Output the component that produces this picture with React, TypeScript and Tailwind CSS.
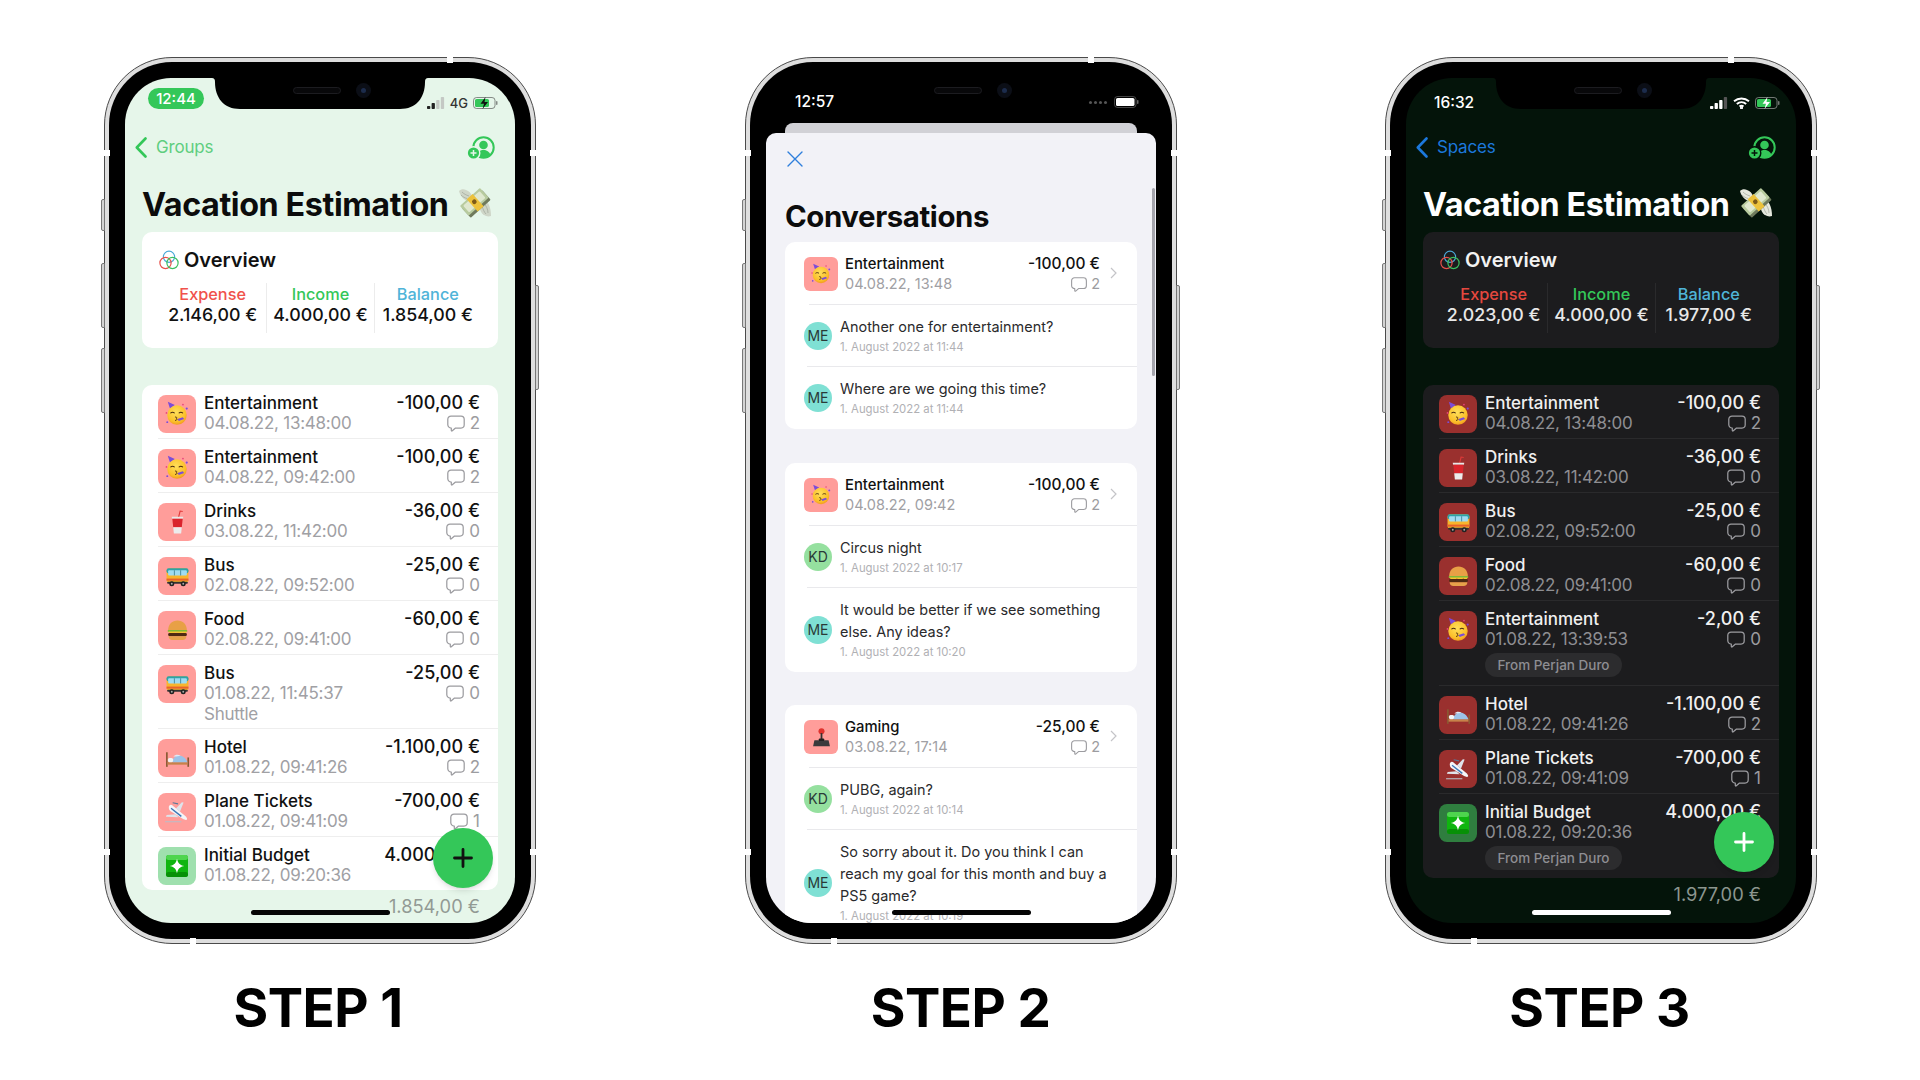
import React from "react";

const cx = (...a: (string | false | undefined)[]) => a.filter(Boolean).join(" ");

function Party() {
  return (
    <svg viewBox="0 0 24 24" className="w-[26px] h-[26px]">
      <defs>
        <radialGradient id="pf" cx="45%" cy="35%" r="70%">
          <stop offset="0%" stopColor="#ffdf5a" />
          <stop offset="70%" stopColor="#fbc02a" />
          <stop offset="100%" stopColor="#f0901c" />
        </radialGradient>
      </defs>
      <path d="M5.500 7 3.500.8 10 3.800z" fill="#7c4dd8" />
      <circle cx="12" cy="13" r="9" fill="url(#pf)" />
      <path d="M6.300 11c.9-.7 2.300-.7 3.200 0M14 11c.9-.7 2.300-.7 3.200 0" stroke="#4a2c10" strokeWidth="1" fill="none" strokeLinecap="round" />
      <path d="M10.500 14.800c1.400 0 1.800.9 1 1.400.9.400.7 1.500-.9 1.700" stroke="#4a2c10" strokeWidth=".9" fill="none" strokeLinecap="round" />
      <path d="M12.500 16.500l4.800-1.500 1.300 1.500-5 2z" fill="#7c4dd8" />
      <circle cx="21" cy="7" r="1" fill="#7c4dd8" />
      <circle cx="2.300" cy="11" r=".8" fill="#e8457c" />
      <circle cx="3" cy="19.500" r=".9" fill="#7c4dd8" />
      <circle cx="17.500" cy="3.300" r=".8" fill="#e8457c" />
    </svg>
  );
}
function Drink() {
  return (
    <svg viewBox="0 0 24 24" className="w-[25px] h-[25px]">
      <path d="M13 7 14.500 1l2.500.4" stroke="#e03a3a" strokeWidth="1.100" fill="none" />
      <path d="M6.500 6.500h11l-.3 2H6.800z" fill="#e8e8e8" />
      <path d="M7 8.500h10l-.9 8H7.900z" fill="#d9252d" />
      <path d="M7.900 16.500h8.200l-.6 6h-7z" fill="#ececec" />
    </svg>
  );
}
function Bus() {
  return (
    <svg viewBox="0 0 24 24" className="w-[25px] h-[25px]">
      <rect x="1.500" y="4" width="21" height="14" rx="3" fill="#f8b52c" />
      <rect x="1.500" y="4" width="21" height="5" rx="2" fill="#2fa2a8" />
      <rect x="3" y="6" width="18" height="5" rx="1" fill="#9fdcf2" />
      <path d="M9 6v5M15 6v5" stroke="#3c7f90" strokeWidth=".8" />
      <rect x="1.500" y="14" width="21" height="2" fill="#e8622c" />
      <rect x="2" y="17" width="20" height="2" rx="1" fill="#333" />
      <circle cx="6.500" cy="19" r="2.400" fill="#222" />
      <circle cx="17.500" cy="19" r="2.400" fill="#222" />
      <circle cx="6.500" cy="19" r=".9" fill="#aaa" />
      <circle cx="17.500" cy="19" r=".9" fill="#aaa" />
    </svg>
  );
}
function Burger() {
  return (
    <svg viewBox="0 0 24 24" className="w-[25px] h-[25px]">
      <path d="M3 12c0-6 4-9.500 9-9.500s9 3.500 9 9.500z" fill="#e8a046" />
      <rect x="2.500" y="11.500" width="19" height="2" rx="1" fill="#7fb83a" />
      <path d="M3 13h18l-1.500 2-3-1-3 1.500-3-1.500-3 1.500-3-1z" fill="#f6c62e" />
      <rect x="3" y="14.500" width="18" height="3" rx="1.400" fill="#4f2a12" />
      <path d="M3.500 17.500h17c0 2.500-1.500 3.500-3.500 3.500H7c-2 0-3.500-1-3.500-3.500z" fill="#e6a24a" />
    </svg>
  );
}
function Bed() {
  return (
    <svg viewBox="0 0 24 24" className="w-[25px] h-[25px]">
      <rect x="1" y="6" width="1.600" height="14" fill="#8a5a33" />
      <rect x="21.500" y="11" width="1.600" height="9" fill="#8a5a33" />
      <rect x="2.500" y="15.500" width="19" height="2.400" fill="#c7824a" />
      <path d="M7 15.500c0-3.500 3-6.500 6.500-6.500s7 3 8 6.500z" fill="#9cc3e8" />
      <path d="M8 10c2-2 5-2 7-.5-2 0-5 1-7 .5z" fill="#dfeaf5" />
      <rect x="2.800" y="11.500" width="5" height="4" rx="1.500" fill="#f3f3f3" />
    </svg>
  );
}
function Plane() {
  return (
    <svg viewBox="0 0 24 24" className="w-[26px] h-[26px]">
      <path d="M5 6c1-1 2.200-.6 3.400.4l11 9c1.500 1.300 2.400 2.800 1.800 3.600s-2.200.3-3.900-.7L5.800 11C4.300 9.800 4 7 5 6z" fill="#f4f5f8" />
      <path d="M11 8.800 16.500 3l1.600.3-3.400 8.500zM10.500 14 2.500 14.800l-.8 1.600 11.800.4z" fill="#dfe3ea" />
      <path d="M6.500 8.500l9.500 7.500" stroke="#3c78b8" strokeWidth="1.300" />
      <path d="M8 3.500l5 1" stroke="#5a7898" strokeWidth="1" />
      <path d="M1 21h15" stroke="#b8bec8" strokeWidth="1" />
    </svg>
  );
}
function Sparkle() {
  return (
    <svg viewBox="0 0 24 24" className="w-[24px] h-[24px]">
      <rect x="1" y="1" width="22" height="22" rx="3" fill="#0fb50f" />
      <rect x="1" y="1" width="22" height="5" rx="2.500" fill="#4ed54e" />
      <rect x="1" y="18" width="22" height="5" rx="2.500" fill="#079007" />
      <path d="M12 4.500c.7 4.500 3 6.800 7.500 7.500-4.500.7-6.800 3-7.500 7.500-.7-4.500-3-6.800-7.500-7.500 4.500-.7 6.800-3 7.500-7.500z" fill="#fff" />
    </svg>
  );
}
function Joystick() {
  return (
    <svg viewBox="0 0 24 24" className="w-[25px] h-[25px]">
      <circle cx="12" cy="5" r="3.400" fill="#e0332e" />
      <rect x="11" y="7" width="2" height="8" fill="#333" />
      <path d="M4 15h16l1.500 7h-19z" fill="#3a3a3c" />
      <rect x="9" y="13" width="6" height="3" rx="1" fill="#222" />
    </svg>
  );
}
function Money({ dark }: { dark: boolean }) {
  const w = dark ? "#e6e8de" : "#cfd6c8";
  return (
    <svg viewBox="0 0 34 31" className="w-[34px] h-[31px]">
      <path d="M1 4c2-2 5-2 7-1 3 1 5 3 6 6l-4 5C6 13 2 9 1 4z" fill={w} />
      <path d="M4 5c2 2 4 3 7 4M3 8c2 2 4 3 6 3.500" stroke="#9fa598" strokeWidth=".7" fill="none" />
      <path d="M22 17l4-5c4 2 7 8 7 17-3 1-5 0-7-1-3-2-5-6-4-11z" fill={w} />
      <path d="M26 16c2 3 4 6 4 10M24 19c1 3 2 6 4 8" stroke="#9fa598" strokeWidth=".7" fill="none" />
      <g transform="rotate(-42 17 15.500)">
        <rect x="3.500" y="11" width="27" height="13" rx="1" fill="#6f7a5c" />
        <rect x="3.500" y="8" width="27" height="13" rx="1" fill="#b8cb9f" />
        <rect x="6" y="10" width="22" height="9" rx="1" fill="#dfe8cf" />
        <rect x="13" y="7.500" width="8" height="16.500" fill="#ecc23c" />
        <circle cx="17" cy="14.500" r="2.300" fill="#7c5a18" />
      </g>
    </svg>
  );
}

function Bubble() {
  return (
    <svg viewBox="0 0 18 17" className="w-[18px] h-[17px]" fill="none" stroke="currentColor" strokeWidth="1.250" strokeLinejoin="round">
      <path d="M4 1h10a3.200 3.200 0 0 1 3.200 3.200v5.600A3.200 3.200 0 0 1 14 13H8.500l-3.200 2.800c-.5.400-1 .2-1-.5V13A3.300 3.300 0 0 1 .8 9.800V4.200A3.200 3.200 0 0 1 4 1z" />
    </svg>
  );
}

function PersonAdd({ ring }: { ring: string }) {
  return (
    <svg viewBox="0 0 29 23" className="w-[29px] h-[23px]" fill="none">
      <circle cx="16.500" cy="11.500" r="10.200" stroke="#34c759" strokeWidth="2" />
      <circle cx="16.500" cy="9" r="4.300" fill="#34c759" />
      <path d="M9.500 19c1-3.500 4-5 7-5s6 1.500 7 5c-2 2-4.500 3-7 3s-5-1-7-3z" fill="#34c759" />
      <circle cx="6.500" cy="17" r="7" fill={ring} />
      <circle cx="6.500" cy="17" r="5.600" fill="#34c759" />
      <path d="M6.500 14v6M3.500 17h6" stroke={ring} strokeWidth="1.500" />
    </svg>
  );
}

function Rings() {
  return (
    <svg viewBox="0 0 20 20" className="w-[20px] h-[20px]" fill="none" strokeWidth="1.200">
      <circle cx="10" cy="6.800" r="5.600" stroke="#4aa8d8" />
      <circle cx="6.500" cy="13" r="5.600" stroke="#e8504a" />
      <circle cx="13.500" cy="13" r="5.600" stroke="#3cc060" />
    </svg>
  );
}

function Battery({ fill, body, bolt, solid }: { fill: string; body: string; bolt?: string; solid?: boolean }) {
  return (
    <svg viewBox="0 0 25 12" className="w-[25px] h-[12px]">
      <rect x=".5" y=".5" width="21.500" height="11" rx="3" fill="none" stroke={body} strokeWidth="1" opacity={solid ? 0.4 : 0.6} />
      <rect x="2" y="2" width={solid ? 18.500 : 14} height="8" rx="1.600" fill={fill} />
      <rect x="23" y="4" width="1.500" height="4" rx=".7" fill={body} opacity=".6" />
      {bolt && <path d="M12.500 0 7.500 6.800h3.500L9.500 12l5.500-7h-3.500z" fill={bolt} />}
    </svg>
  );
}

function Signal({ on, off, active }: { on: string; off: string; active: number }) {
  return (
    <svg viewBox="0 0 18 12" className="w-[18px] h-[12px]">
      {[0, 1, 2, 3].map((i) => (
        <rect key={i} x={i * 4.600} y={9 - i * 3} width="3.300" height={3 + i * 3} rx=".8" fill={i < active ? on : off} />
      ))}
    </svg>
  );
}

function Wifi() {
  return (
    <svg viewBox="0 0 17 12" className="w-[17px] h-[12px]" fill="none" stroke="#fff" strokeWidth="1.900">
      <path d="M1 4.200c4.300-3.700 10.700-3.700 15 0" />
      <path d="M3.800 7c2.700-2.300 6.700-2.300 9.400 0" />
      <path d="M6.500 9.600c1.200-1 2.800-1 4 0" />
      <circle cx="8.500" cy="10.800" r=".6" fill="#fff" />
    </svg>
  );
}

function Chevron({ color }: { color: string }) {
  return (
    <svg viewBox="0 0 12 21" className="w-[12px] h-[21px]" fill="none" stroke={color} strokeWidth="2.600" strokeLinecap="round" strokeLinejoin="round">
      <path d="M10.500 1.500 1.800 10.500l8.700 9" />
    </svg>
  );
}

function Notch() {
  return (
    <div className="absolute top-0 left-[87px] w-[216px] h-[31px]">
      <svg viewBox="0 0 216 31" className="w-[216px] h-[31px]">
        <path d="M0 0C2 0 3 1 3 4 3 20 12 31 28 31H188C204 31 213 20 213 4 213 1 214 0 216 0Z" fill="#000" />
      </svg>
      <div className="absolute left-[81px] top-[9px] w-[48px] h-[7px] rounded-full bg-[#08080a] border border-[#1c1c20]" />
      <div className="absolute left-[144px] top-[5px] w-[15px] h-[15px] rounded-full bg-[#0b0e16]">
        <div className="w-[5px] h-[5px] rounded-full bg-[#1c2c4c] mt-[5px] ml-[5px]" />
      </div>
    </div>
  );
}

function Phone({ children, screen }: { children: React.ReactNode; screen: string }) {
  return (
    <div className="relative w-[432px] h-[887px] rounded-[68px] border border-[#4a4a4a] bg-[#dedede] p-[4px] shrink-0">
      <div className="absolute left-[-4px] top-[141px] w-[4px] h-[32px] bg-[#d4d4d4] border border-[#777] rounded-l-[2px]" />
      <div className="absolute left-[-4px] top-[205px] w-[4px] h-[65px] bg-[#d4d4d4] border border-[#777] rounded-l-[2px]" />
      <div className="absolute left-[-4px] top-[290px] w-[4px] h-[65px] bg-[#d4d4d4] border border-[#777] rounded-l-[2px]" />
      <div className="absolute right-[-4px] top-[227px] w-[4px] h-[105px] bg-[#d4d4d4] border border-[#777] rounded-r-[2px]" />
      <div className="absolute left-[342px] top-[-1px] w-[6px] h-[6px] bg-white" />
      <div className="absolute left-[-1px] top-[92px] w-[6px] h-[6px] bg-white" />
      <div className="absolute right-[-1px] top-[92px] w-[6px] h-[6px] bg-white" />
      <div className="absolute left-[-1px] top-[791px] w-[6px] h-[6px] bg-white" />
      <div className="absolute right-[-1px] top-[791px] w-[6px] h-[6px] bg-white" />
      <div className="absolute left-[85px] bottom-[-1px] w-[6px] h-[6px] bg-white" />
      <div className="w-full h-full rounded-[63px] bg-black p-[16px]">
        <div className={cx("relative w-[390px] h-[845px] rounded-[46px] overflow-hidden flex flex-col", screen)}>{children}</div>
      </div>
    </div>
  );
}

type Tx = { e: string; t: string; d: string; a: string; c: string; x?: string; chip?: boolean; g?: boolean; last?: boolean };
const icons: Record<string, React.ReactNode> = {
  party: <Party />, drink: <Drink />, bus: <Bus />, burger: <Burger />, bed: <Bed />, plane: <Plane />, spark: <Sparkle />, joy: <Joystick />,
};

function Row({ r, dark }: { r: Tx; dark: boolean }) {
  const sub = dark ? "text-[#8e8e92]" : "text-[#a0a0a4]";
  return (
    <div className="pl-[16px]">
      <div className={cx("flex pr-[18px]", !r.last && "border-b", dark ? "border-[#2a2a2c]" : "border-[#eeeeee]")}>
        <div
          className={cx(
            "w-[38px] h-[38px] mt-[10px] rounded-[8px] shrink-0 flex items-center justify-center",
            r.g ? (dark ? "bg-[#2f7e3f]" : "bg-[#9fe0ae]") : dark ? "bg-[#9a302e]" : "bg-[#ff9d9a]"
          )}
        >
          {icons[r.e]}
        </div>
        <div className="ml-[8px] flex-1 pt-[8px] pb-[4px] text-[17px] leading-[21px]">
          <div className={cx("font-medium leading-[20px]", dark ? "text-[#f0f0f0]" : "text-[#111]")}>{r.t}</div>
          <div className={cx("tracking-[-0.25px]", sub)}>{r.d}</div>
          {r.x && <div className={cx("leading-[20px] tracking-[-0.25px]", sub)}>{r.x}</div>}
          {r.chip && (
            <div className="mt-[3px] mb-[4px] w-[137px] h-[24px] rounded-full flex items-center justify-center text-[13.500px] leading-[24px] font-medium text-[#8e8e93] bg-[#2c2c2e]">
              From Perjan Duro
            </div>
          )}
        </div>
        <div className="pt-[8px] leading-[21px] text-right">
          <div className={cx("text-[18px] leading-[20px] font-medium", dark ? "text-[#f0f0f0]" : "text-[#111]")}>{r.a}</div>
          {r.c && (
            <div className="flex justify-end items-center gap-[5px] text-[17px] text-[#9c9ca0] h-[21px]">
              <Bubble />
              <span>{r.c}</span>
            </div>
          )}
        </div>
      </div>
    </div>
  );
}

function Overview({ dark, v }: { dark: boolean; v: [string, string, string] }) {
  const cols = [
    { l: "Expense", c: dark ? "text-[#e5483f]" : "text-[#f0524c]" },
    { l: "Income", c: "text-[#34c759]" },
    { l: "Balance", c: "text-[#4fb4d8]" },
  ];
  return (
    <div className={cx("mx-[17px] h-[116px] rounded-[10px] pt-[17px] px-[17px]", dark ? "bg-[#1c1c1e]" : "bg-white")}>
      <div className="flex items-center gap-[5px] h-[22px]">
        <Rings />
        <span className={cx("text-[20px] font-semibold", dark ? "text-[#f2f2f2]" : "text-[#111]")}>Overview</span>
      </div>
      <div className="grid grid-cols-3 mt-[12px] h-[50px]">
        {cols.map((c, i) => (
          <div key={c.l} className={cx("text-center pt-[1px]", i > 0 && "border-l", dark ? "border-[#2a2a2c]" : "border-[#ececec]")}>
            <div className={cx("text-[16.300px] leading-[21px] font-medium", c.c)}>{c.l}</div>
            <div className={cx("text-[17.800px] leading-[20px] font-medium whitespace-nowrap", dark ? "text-[#e8e8e8]" : "text-[#111]")}>{v[i]}</div>
          </div>
        ))}
      </div>
    </div>
  );
}

function Fab({ top, dark }: { top: string; dark: boolean }) {
  return (
    <div className={cx("absolute left-[308px] w-[60px] h-[60px] rounded-full bg-[#34c759] flex items-center justify-center shadow-md", top)}>
      <svg viewBox="0 0 20 20" className="w-[20px] h-[20px]" stroke={dark ? "#fff" : "#111"} strokeWidth="2.800" strokeLinecap="round">
        <path d="M10 1.500v17M1.500 10h17" />
      </svg>
    </div>
  );
}

function Home({ color }: { color: string }) {
  return <div className={cx("absolute left-[126px] top-[832px] w-[139px] h-[5px] rounded-full", color)} />;
}

function ExpenseScreen({ dark, back, rows, ov, total, fabTop, left, right }: { dark: boolean; back: string; rows: Tx[]; ov: [string, string, string]; total: string; fabTop: string; left: React.ReactNode; right: React.ReactNode }) {
  return (
    <>
      <div className="h-[47px] flex justify-between items-start shrink-0 pr-[17px]">
        {left}
        {right}
      </div>
      <div className="h-[44px] shrink-0 flex items-center justify-between pl-[10px] pr-[19px] pt-[1px]">
        <div className="flex items-center gap-[9px]">
          <Chevron color={dark ? "#1c78dc" : "#34c759"} />
          <span className={cx("text-[17px] tracking-[-0.2px]", dark ? "text-[#1c78dc]" : "text-[#5fce7f]")}>{back}</span>
        </div>
        <PersonAdd ring={dark ? "#04140a" : "#e6f6ea"} />
      </div>
      <div className="h-[63px] shrink-0 pl-[17px] pt-[15px] flex items-start gap-[9px]">
        <span className={cx("text-[32.300px] leading-[41px] font-bold tracking-[-0.4px] whitespace-nowrap", dark ? "text-white" : "text-[#0c0c0c]")}>Vacation Estimation</span>
        <span className="mt-[3px]"><Money dark={dark} /></span>
      </div>
      <Overview dark={dark} v={ov} />
      <div className={cx("mx-[17px] mt-[37px] rounded-[10px]", dark ? "bg-[#1c1c1e]" : "bg-white")}>
        {rows.map((r, i) => (
          <Row key={i} r={r} dark={dark} />
        ))}
      </div>
      <div className={cx("mt-[5px] pr-[35px] text-right text-[18.300px] leading-[22px]", dark ? "text-[#8c968f]" : "text-[#929a94]")}>{total}</div>
      <Fab top={fabTop} dark={dark} />
      <Home color={dark ? "bg-white" : "bg-[#050505]"} />
    </>
  );
}

type Msg = { i: "ME" | "KD"; t: string[]; d: string; pb: string };
function Card({ e, title, date, amt, msgs, className }: { e: string; title: string; date: string; amt: string; msgs: Msg[]; className?: string }) {
  return (
    <div className={cx("mx-[19px] rounded-[10px] bg-white", className)}>
      <div className="flex items-start h-[62px] pl-[19px] pr-[20px] pt-[15px]">
        <div className="w-[34px] h-[34px] rounded-[6px] bg-[#ff9d9a] flex items-center justify-center shrink-0">
          <div className="scale-[0.85]">{icons[e]}</div>
        </div>
        <div className="ml-[7px] flex-1 -mt-[3px] leading-[20px]">
          <div className="text-[14.800px] font-medium text-[#111]">{title}</div>
          <div className="text-[14.500px] text-[#a0a0a4]">{date}</div>
        </div>
        <div className="-mt-[3px] leading-[20px] text-right">
          <div className="text-[15.500px] font-medium text-[#111]">{amt}</div>
          <div className="flex items-center justify-end gap-[3px] text-[14.500px] text-[#9c9ca0]">
            <div className="scale-[0.9]"><Bubble /></div>
            <span>2</span>
          </div>
        </div>
        <svg viewBox="0 0 7 12" className="w-[7px] h-[12px] ml-[10px] mt-[10px]" fill="none" stroke="#c4c4c8" strokeWidth="1.200"><path d="M1 1l5 5-5 5" /></svg>
      </div>
      {msgs.map((m, i) => (
        <div key={i}>
          <div className={cx("h-px bg-[#e9e9ec]", i === 0 ? "ml-[24px]" : "ml-[22px]")} />
          <div className={cx("flex items-center pl-[19px] pr-[16px] pt-[11px]", m.pb)}>
            <div className={cx("w-[28px] h-[28px] rounded-full shrink-0 flex items-center justify-center text-[14px] text-[#2a3a38]", m.i === "ME" ? "bg-[#7fe0d4]" : "bg-[#95e09f]")}>{m.i}</div>
            <div className="ml-[8px]">
              {m.t.map((l) => (
                <div key={l} className="text-[14.450px] leading-[22px] text-[#2a2a2c] whitespace-nowrap">{l}</div>
              ))}
              <div className="mt-[1px] text-[11.350px] leading-[16px] text-[#b0b0b4] whitespace-nowrap">{m.d}</div>
            </div>
          </div>
        </div>
      ))}
    </div>
  );
}

const r1: Tx[] = [
  { e: "party", t: "Entertainment", d: "04.08.22, 13:48:00", a: "-100,00 €", c: "2" },
  { e: "party", t: "Entertainment", d: "04.08.22, 09:42:00", a: "-100,00 €", c: "2" },
  { e: "drink", t: "Drinks", d: "03.08.22, 11:42:00", a: "-36,00 €", c: "0" },
  { e: "bus", t: "Bus", d: "02.08.22, 09:52:00", a: "-25,00 €", c: "0" },
  { e: "burger", t: "Food", d: "02.08.22, 09:41:00", a: "-60,00 €", c: "0" },
  { e: "bus", t: "Bus", d: "01.08.22, 11:45:37", a: "-25,00 €", c: "0", x: "Shuttle" },
  { e: "bed", t: "Hotel", d: "01.08.22, 09:41:26", a: "-1.100,00 €", c: "2" },
  { e: "plane", t: "Plane Tickets", d: "01.08.22, 09:41:09", a: "-700,00 €", c: "1" },
  { e: "spark", t: "Initial Budget", d: "01.08.22, 09:20:36", a: "4.000,00 €", c: "", g: true, last: true },
];
const r3: Tx[] = [
  { e: "party", t: "Entertainment", d: "04.08.22, 13:48:00", a: "-100,00 €", c: "2" },
  { e: "drink", t: "Drinks", d: "03.08.22, 11:42:00", a: "-36,00 €", c: "0" },
  { e: "bus", t: "Bus", d: "02.08.22, 09:52:00", a: "-25,00 €", c: "0" },
  { e: "burger", t: "Food", d: "02.08.22, 09:41:00", a: "-60,00 €", c: "0" },
  { e: "party", t: "Entertainment", d: "01.08.22, 13:39:53", a: "-2,00 €", c: "0", chip: true },
  { e: "bed", t: "Hotel", d: "01.08.22, 09:41:26", a: "-1.100,00 €", c: "2" },
  { e: "plane", t: "Plane Tickets", d: "01.08.22, 09:41:09", a: "-700,00 €", c: "1" },
  { e: "spark", t: "Initial Budget", d: "01.08.22, 09:20:36", a: "4.000,00 €", c: "", g: true, chip: true, last: true },
];

function Label({ children, className }: { children: React.ReactNode; className: string }) {
  return <div className={cx("mt-[32px] text-[53px] leading-[64px] font-bold tracking-[-0.5px] text-black whitespace-nowrap", className)}>{children}</div>;
}

export default function App() {
  return (
    <div className="w-[1920px] h-[1080px] overflow-hidden bg-white flex items-start pl-[104px] pt-[57px] font-[family-name:Inter,sans-serif]">
      <div className="flex flex-col items-center shrink-0">
        <Phone screen="bg-[#e6f6ea]">
          <ExpenseScreen
            dark={false}
            back="Groups"
            rows={r1}
            ov={["2.146,00 €", "4.000,00 €", "1.854,00 €"]}
            total="1.854,00 €"
            fabTop="top-[750px]"
            left={
              <div className="ml-[23px] mt-[10px] w-[56px] h-[21px] rounded-full bg-[#34c759] text-white text-[15px] leading-[21px] text-center font-medium">12:44</div>
            }
            right={
              <div className="flex items-center mt-[19px] gap-[5px]">
                <Signal on="#222" off="#c4c8c4" active={2} />
                <span className="text-[13px] leading-[12px] font-medium text-[#333]">4G</span>
                <Battery fill="#34c759" body="#444" bolt="#111" />
              </div>
            }
          />
          <Notch />
        </Phone>
        <Label className="mr-[4px]">STEP 1</Label>
      </div>

      <div className="flex flex-col items-center shrink-0 ml-[209px]">
        <Phone screen="bg-black">
          <div className="h-[45px] shrink-0 flex justify-between items-start pr-[17px]">
            <span className="ml-[29px] mt-[14px] text-[15.500px] leading-[20px] font-medium text-white">12:57</span>
            <div className="flex items-center mt-[18px] gap-[7px]">
              <div className="flex gap-[2px]">
                <span className="w-[3px] h-[3px] rounded-full bg-[#555]" />
                <span className="w-[3px] h-[3px] rounded-full bg-[#555]" />
                <span className="w-[3px] h-[3px] rounded-full bg-[#555]" />
                <span className="w-[3px] h-[3px] rounded-full bg-[#555]" />
              </div>
              <Battery fill="#fff" body="#aaa" solid />
            </div>
          </div>
          <div className="h-[10px] shrink-0 mx-[19px] rounded-t-[8px] bg-[#d1d1d6]" />
          <div className="flex-1 min-h-0 relative rounded-t-[10px] bg-[#f2f2f7] overflow-hidden">
            <div className="pl-[21px] pt-[18px]">
              <svg viewBox="0 0 16 16" className="w-[16px] h-[16px]" fill="none" stroke="#2f7fdc" strokeWidth="1.400" strokeLinecap="round">
                <path d="M1 1l14 14M15 1 1 15" />
              </svg>
            </div>
            <div className="pl-[19px] mt-[32px] text-[29.400px] leading-[36px] font-bold tracking-[-0.4px] text-[#0c0c0c]">Conversations</div>
            <div className="mt-[7px] flex flex-col gap-[34px]">
              <Card
                e="party" title="Entertainment" date="04.08.22, 13:48" amt="-100,00 €"
                msgs={[
                  { i: "ME", t: ["Another one for entertainment?"], d: "1. August 2022 at 11:44", pb: "pb-[11px]" },
                  { i: "ME", t: ["Where are we going this time?"], d: "1. August 2022 at 11:44", pb: "pb-[12px]" },
                ]}
              />
              <Card
                e="party" title="Entertainment" date="04.08.22, 09:42" amt="-100,00 €"
                msgs={[
                  { i: "KD", t: ["Circus night"], d: "1. August 2022 at 10:17", pb: "pb-[11px]" },
                  { i: "ME", t: ["It would be better if we see something", "else. Any ideas?"], d: "1. August 2022 at 10:20", pb: "pb-[12px]" },
                ]}
              />
              <Card
                className="-mt-[1px]"
                e="joy" title="Gaming" date="03.08.22, 17:14" amt="-25,00 €"
                msgs={[
                  { i: "KD", t: ["PUBG, again?"], d: "1. August 2022 at 10:14", pb: "pb-[11px]" },
                  { i: "ME", t: ["So sorry about it. Do you think I can", "reach my goal for this month and buy a", "PS5 game?"], d: "1. August 2022 at 10:19", pb: "pb-[11px]" },
                ]}
              />
            </div>
            <div className="absolute left-[386px] top-[55px] w-[3px] h-[188px] rounded-full bg-[#a4a4ac]" />
          </div>
          <Home color="bg-[#050505]" />
          <Notch />
        </Phone>
        <Label className="mr-[1px]">STEP 2</Label>
      </div>

      <div className="flex flex-col items-center shrink-0 ml-[208px]">
        <Phone screen="bg-[#04140a]">
          <ExpenseScreen
            dark
            back="Spaces"
            rows={r3}
            ov={["2.023,00 €", "4.000,00 €", "1.977,00 €"]}
            total="1.977,00 €"
            fabTop="top-[734px]"
            left={<span className="ml-[28px] mt-[15px] text-[15.500px] leading-[20px] font-medium text-white">16:32</span>}
            right={
              <div className="flex items-center mt-[19px] gap-[5px] -mr-[1px]">
                <Signal on="#fff" off="#555" active={3} />
                <Wifi />
                <Battery fill="#34c759" body="#bbb" bolt="#fff" />
              </div>
            }
          />
          <Notch />
        </Phone>
        <Label className="mr-[3px]">STEP 3</Label>
      </div>
    </div>
  );
}
